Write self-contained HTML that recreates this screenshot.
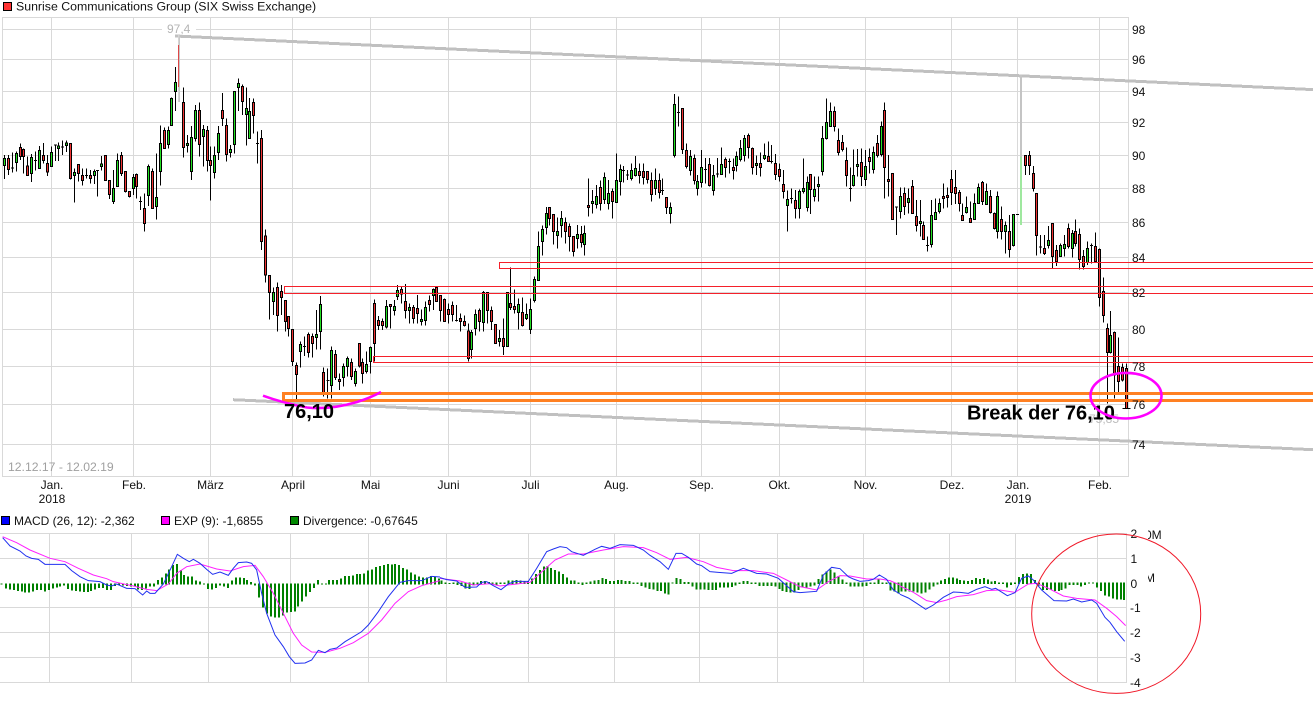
<!DOCTYPE html>
<html lang="de"><head><meta charset="utf-8"><title>Sunrise Communications Group</title>
<style>
html,body{margin:0;padding:0;background:#fff;width:1313px;height:715px;overflow:hidden}
svg{position:absolute;left:0;top:0;display:block}
text{font-family:"Liberation Sans",sans-serif;font-size:12px;fill:#111}
.w{stroke:#000;stroke-width:3;fill:none}
.r{stroke:#000;stroke-width:3;fill:#f03333}
.g{stroke:#000;stroke-width:3;fill:#22e022}
.h{stroke:#008000;stroke-width:6;fill:none}
.b{stroke:#2030f0;stroke-width:3;fill:none}
.m{stroke:#ff20ff;stroke-width:3;fill:none}
</style></head><body>
<svg width="1313" height="715" viewBox="0 0 1313 715" xmlns="http://www.w3.org/2000/svg">
<!-- main grid -->
<g shape-rendering="crispEdges" stroke="#d9d9d9" stroke-width="1" fill="none">
<path d="M2.5 17.5H1128.5V476.5H2.5Z"/>
<path d="M2 29.5H1128M2 59.5H1128M2 91.5H1128M2 122.5H1128M2 155.5H1128M2 188.5H1128M2 222.5H1128M2 257.5H1128M2 292.5H1128M2 329.5H1128M2 366.5H1128M2 404.5H1128M2 444.5H1128"/>
<path d="M51.5 17V476M133.5 17V476M210.5 17V476M292.5 17V476M370.5 17V476M448.5 17V476M530.5 17V476M616.5 17V476M701.5 17V476M779.5 17V476M865.5 17V476M951.5 17V476M1017.5 17V476M1099.5 17V476"/>
<!-- macd grid -->
<path d="M0 533.5H1127M0 558.5H1127M0 607.5H1127M0 632.5H1127M0 657.5H1127M0 682.5H1127"/>
<path d="M49.5 533V683M131.5 533V683M208.5 533V683M290.5 533V683M368.5 533V683M446.5 533V683M528.5 533V683M614.5 533V683M699.5 533V683M777.5 533V683M863.5 533V683M949.5 533V683M1015.5 533V683M1097.5 533V683M1126.5 533V683"/>
</g>
<!-- trend lines -->
<g shape-rendering="crispEdges" stroke="#c0c0c0" stroke-width="3" fill="none">
<path d="M175 36L1313 89.6"/>
<path d="M233 399.7L1313 449.7"/>
</g>
<rect x="162" y="25" width="34" height="9" fill="#fff"/>
<text x="167" y="33" style="fill:#b4b4b4">97,4</text>
<!-- special bars -->
<g shape-rendering="crispEdges" fill="none">
<path d="M178.5 35V102" stroke="#d4d4d4" stroke-width="1"/>
<path d="M179.5 35V102" stroke="#c8c8c8" stroke-width="1"/>
<path d="M178.5 45V87" stroke="#e04848" stroke-width="1"/>
<path d="M1021 75V157" stroke="#c4c4c4" stroke-width="2"/>
<path d="M1021 157V225" stroke="#9fe89f" stroke-width="2"/>
</g>
<!-- candles: segment 1 -->
<g transform="translate(0,0) scale(.33333)" shape-rendering="crispEdges">
<path class="w" d="M13 465V537M25 465V525M37 458V517M49 455V515M61 430V480M70 445V520M82 470V527M94 462V546M106 455V512M118 438V507M130 429V490M142 465V528M154 440V500M166 433V483M175 427V483M187 421V465M199 422V456M211 429V538M223 505V608M235 492V545M247 505V557M259 505V535M271 510V550M283 508V552M292 510V590M304 468V512M316 465V543M328 540V597M340 510V612M352 460V560M364 456V528M376 514V578M388 573V592M400 522V585M409 520V596M421 590V630M433 580V695M445 494V618M457 505V625M469 460V658M481 376V557M493 382V446M505 380V445M514 292V378M526 201V333M550 262V472M562 405V458M574 378V540M586 315V425M598 307V470M610 375V500M622 378V515M631 440V602M643 440V536M655 378V480M667 279V378M679 355V485M691 435V473M703 274V460M715 235V333M727 253V345M739 262V437M748 294V415M760 295V400M772 395V490M784 390V750M33 504h9M102 481h9M162 435h9M183 441h9M255 526h9M288 512h9M417 604h9M768 430h9"/>
<path class="g" d="M10 475h6V497h-6zM46 460h6V488h-6zM91 472h6V521h-6zM115 451h6V505h-6zM151 457h6V499h-6zM172 438h6V446h-6zM196 429h6V437h-6zM220 517h6V527h-6zM280 515h6V527h-6zM301 492h6V500h-6zM337 565h6V605h-6zM349 481h6V559h-6zM397 532h6V565h-6zM442 499h6V586h-6zM466 592h6V620h-6zM478 430h6V515h-6zM502 391h6V433h-6zM511 295h6V376h-6zM523 247h6V275h-6zM559 430h6V436h-6zM571 412h6V515h-6zM583 331h6V415h-6zM607 388h6V409h-6zM640 466h6V517h-6zM652 400h6V457h-6zM688 448h6V457h-6zM700 275h6V433h-6zM712 250h6V263h-6zM736 325h6V344h-6zM745 335h6V415h-6z"/>
<path class="r" d="M22 475h6V508h-6zM58 442h6V470h-6zM67 448h6V470h-6zM79 498h6V527h-6zM127 466h6V482h-6zM139 490h6V516h-6zM208 430h6V536h-6zM232 493h6V520h-6zM244 526h6V542h-6zM268 526h6V536h-6zM313 466h6V541h-6zM325 541h6V584h-6zM361 466h6V521h-6zM373 515h6V574h-6zM385 574h6V590h-6zM406 523h6V560h-6zM430 625h6V670h-6zM454 514h6V625h-6zM490 391h6V446h-6zM547 307h6V443h-6zM595 331h6V433h-6zM619 391h6V481h-6zM628 481h6V496h-6zM664 331h6V355h-6zM676 376h6V463h-6zM724 259h6V305h-6zM757 307h6V346h-6zM781 415h6V725h-6z"/>
</g>
<!-- candles: segment 2 -->
<g transform="translate(230,230) scale(.33333)" shape-rendering="crispEdges">
<path class="w" d="M106 -2V158M118 136V268M130 172V255M142 157V305M154 165V255M166 210V305M175 258V320M187 298V408M199 398V512M211 335V412M223 320V378M235 307V382M247 310V382M259 240V358M271 198V358M281 412V500M293 415V505M305 350V505M317 360V450M329 430V480M341 400V470M353 380V440M365 385V450M377 415V470M388 340V412M397 385V460M409 365V430M421 350V430M433 208V395M445 258V300M457 265V300M469 210V295M481 222V296M493 210V256M502 165V210M514 170V220M526 162V265M538 220V280M550 225V280M562 195V280M574 238V287M586 215V287M598 197V245M610 175V240M619 170V215M631 195V275M643 205V275M655 220V280M667 215V275M679 225V275M691 250V305M703 256V290M715 280V395M724 300V385M736 238V317M748 235V305M760 183V305M772 187V280M784 230V300M796 283V340M808 300V350M820 265V375M832 187V350M841 112V240M853 178V250M865 205V298M877 203V290M889 220V270M901 205V312M913 140V218M925 5V151M219 349h9M289 452h9M675 271h9"/>
<path class="g" d="M127 187h6V214h-6zM208 343h6V364h-6zM256 313h6V322h-6zM268 223h6V304h-6zM302 362h6V466h-6zM338 409h6V442h-6zM350 385h6V409h-6zM374 424h6V460h-6zM406 403h6V424h-6zM418 352h6V394h-6zM466 229h6V291h-6zM490 229h6V241h-6zM499 181h6V199h-6zM535 232h6V241h-6zM571 268h6V274h-6zM583 232h6V272h-6zM607 178h6V196h-6zM721 307h6V358h-6zM733 253h6V295h-6zM757 187h6V277h-6zM805 325h6V334h-6zM829 187h6V349h-6zM862 223h6V247h-6zM886 253h6V265h-6zM898 238h6V298h-6zM910 148h6V211h-6zM922 49h6V151h-6z"/>
<path class="r" d="M103 18h6V135h-6zM115 136h6V187h-6zM139 172h6V257h-6zM151 184h6V203h-6zM163 212h6V275h-6zM172 260h6V295h-6zM184 298h6V394h-6zM196 406h6V433h-6zM232 313h6V367h-6zM244 319h6V340h-6zM278 427h6V490h-6zM314 373h6V442h-6zM326 448h6V455h-6zM362 397h6V440h-6zM385 340h6V408h-6zM394 397h6V430h-6zM430 220h6V340h-6zM442 271h6V286h-6zM454 274h6V287h-6zM478 223h6V229h-6zM511 178h6V192h-6zM523 214h6V241h-6zM547 232h6V265h-6zM559 235h6V250h-6zM595 211h6V223h-6zM616 172h6V214h-6zM628 196h6V241h-6zM640 208h6V274h-6zM652 238h6V253h-6zM664 226h6V253h-6zM688 265h6V274h-6zM700 274h6V286h-6zM712 303h6V385h-6zM745 241h6V274h-6zM769 187h6V241h-6zM781 241h6V274h-6zM793 283h6V340h-6zM817 325h6V349h-6zM838 220h6V232h-6zM850 229h6V238h-6zM874 247h6V286h-6z"/>
</g>
<!-- candles: segment 3 -->
<g transform="translate(430,80) scale(.33333)" shape-rendering="crispEdges">
<path class="w" d="M337 436V527M349 381V463M358 381V437M370 403V493M382 412V505M394 393V472M406 412V490M418 430V515M430 469V530M442 435V505M454 438V502M463 436V527M475 295V410M487 330V400M499 315V385M511 302V392M523 277V372M535 300V388M547 325V416M559 220V367M571 253V347M580 258V307M592 270V300M604 250V302M616 228V290M628 250V310M640 250V314M652 274V310M664 278V365M676 265V345M688 280V355M697 295V345M709 352V402M721 367V431M576 271h9M588 285h9M693 332h9"/>
<path class="g" d="M334 448h6V485h-6zM346 400h6V443h-6zM379 454h6V466h-6zM391 415h6V436h-6zM439 463h6V475h-6zM460 460h6V493h-6zM484 364h6V370h-6zM496 349h6V373h-6zM520 292h6V358h-6zM532 340h6V370h-6zM556 301h6V367h-6zM568 268h6V304h-6zM601 271h6V295h-6zM613 265h6V286h-6zM673 301h6V325h-6zM718 382h6V400h-6z"/>
<path class="r" d="M355 382h6V415h-6zM367 404h6V454h-6zM403 427h6V455h-6zM415 439h6V469h-6zM427 469h6V515h-6zM451 463h6V487h-6zM472 376h6V382h-6zM508 322h6V370h-6zM544 334h6V364h-6zM625 274h6V286h-6zM637 274h6V292h-6zM649 274h6V298h-6zM661 301h6V343h-6zM685 301h6V337h-6zM706 352h6V382h-6z"/>
</g>
<!-- candles: segment 4 -->
<g transform="translate(660,80) scale(.33333)" shape-rendering="crispEdges">
<path class="w" d="M43 42V232M55 50V140M67 85V222M79 190V265M91 210V287M103 223V314M112 285V347M124 210V322M136 234V310M148 234V320M160 255V347M172 234V293M184 202V285M196 232V293M208 235V280M220 235V298M229 215V275M241 180V245M253 165V245M265 160V235M277 202V283M289 227V285M301 218V290M313 190V240M325 185V245M334 195V250M346 222V300M358 250V305M370 270V355M382 332V455M394 325V370M406 330V415M418 328V415M430 235V340M442 290V395M451 283V402M463 290V365M475 290V365M487 138V287M499 55V178M511 67V140M523 80V155M535 145V227M547 165V215M559 202V320M571 262V365M580 208V320M592 207V290M604 205V318M616 210V318M628 205V280M640 200V280M652 165V232M664 125V230M673 67V355M685 225V350M697 280V420M709 380V465M721 322V415M733 322V405M745 325V400M757 300V402M769 360V455M781 360V470M790 425V480M802 470V515M814 360V502M826 355V420M838 355V400M850 310V385M862 322V382M874 270V375M886 270V372M898 330V395M907 370V422M919 350V400M931 365V428M943 340V420M955 310V372M967 303V375M979 310V375M991 330V400M1003 397V448M1012 335V475M1024 380V478M1036 425V520M1048 405V532M1060 402V500M1096 225V285M1108 213V285M1120 258V335M1129 340V527M1141 465V520M1153 465V525M1165 438V505M1177 430V565M1189 495V558M1201 490V530M1213 465V530M1225 430V505M1237 450V532M1246 418V500M1258 445V568M1270 510V568M1282 485V555M1294 490V550M1306 458V545M1318 505V680M51 98h9M132 268h9M168 282h9M204 244h9M330 244h9M390 355h9M567 325h9M705 381h9M798 496h9M1068 403h9M1137 501h9M1290 497h9"/>
<path class="g" d="M40 73h6V226h-6zM88 229h6V271h-6zM109 304h6V325h-6zM121 262h6V307h-6zM157 286h6V331h-6zM181 253h6V283h-6zM226 229h6V256h-6zM238 205h6V238h-6zM250 175h6V226h-6zM286 250h6V256h-6zM310 226h6V235h-6zM379 358h6V376h-6zM415 334h6V385h-6zM427 325h6V334h-6zM439 307h6V382h-6zM460 328h6V349h-6zM472 313h6V319h-6zM484 175h6V274h-6zM496 127h6V175h-6zM508 94h6V139h-6zM577 286h6V316h-6zM589 253h6V259h-6zM613 259h6V298h-6zM637 217h6V268h-6zM661 139h6V223h-6zM718 349h6V394h-6zM742 355h6V367h-6zM778 424h6V430h-6zM811 406h6V493h-6zM823 397h6V418h-6zM835 370h6V394h-6zM916 382h6V397h-6zM940 370h6V418h-6zM952 322h6V370h-6zM976 334h6V373h-6zM1009 349h6V454h-6zM1033 436h6V454h-6zM1057 403h6V496h-6zM1162 481h6V496h-6zM1198 496h6V529h-6zM1210 493h6V505h-6zM1234 460h6V505h-6zM1279 505h6V548h-6z"/>
<path class="r" d="M64 85h6V208h-6zM76 211h6V259h-6zM100 235h6V301h-6zM145 253h6V316h-6zM193 238h6V262h-6zM217 262h6V271h-6zM262 166h6V202h-6zM274 205h6V262h-6zM298 250h6V262h-6zM322 229h6V244h-6zM343 250h6V283h-6zM355 268h6V289h-6zM367 313h6V334h-6zM403 361h6V385h-6zM448 283h6V328h-6zM520 94h6V139h-6zM532 181h6V217h-6zM544 187h6V208h-6zM556 241h6V287h-6zM601 247h6V289h-6zM625 232h6V244h-6zM649 190h6V226h-6zM670 91h6V262h-6zM682 298h6V304h-6zM694 280h6V418h-6zM730 340h6V379h-6zM754 319h6V400h-6zM766 409h6V436h-6zM787 436h6V478h-6zM847 349h6V355h-6zM859 346h6V352h-6zM871 298h6V337h-6zM883 322h6V340h-6zM895 337h6V370h-6zM904 406h6V421h-6zM928 415h6V427h-6zM964 307h6V364h-6zM988 349h6V397h-6zM1000 400h6V445h-6zM1021 418h6V454h-6zM1045 454h6V508h-6zM1093 226h6V256h-6zM1105 226h6V256h-6zM1117 280h6V325h-6zM1126 340h6V466h-6zM1150 505h6V520h-6zM1174 430h6V529h-6zM1186 511h6V544h-6zM1222 445h6V500h-6zM1243 454h6V490h-6zM1255 463h6V539h-6zM1267 529h6V560h-6zM1303 499h6V545h-6zM1315 509h6V652h-6z"/>
</g>
<!-- candles: segment 5 -->
<g transform="translate(960,220) scale(.33333)" shape-rendering="crispEdges">
<path class="w" d="M430 172V308M442 310V550M451 273V400M463 335V535M475 352V525M487 430V485M499 430V565M487 565H512"/>
<path class="g" d="M448 346h6V397h-6z"/>
<path class="r" d="M427 214h6V287h-6zM439 325h6V397h-6zM460 337h6V465h-6zM472 439h6V485h-6zM484 442h6V480h-6zM496 445h6V565h-6z"/>
</g>
<!-- red zones -->
<g shape-rendering="crispEdges" fill="none" stroke="#f5202a" stroke-width="1">
<path d="M1313 286.5H284.5V293.5H1313"/>
<path d="M1313 262.5H499.5V268.5H1313"/>
<path d="M1313 356.5H373.5V362.5H1313"/>
</g>
<!-- orange zone -->
<path d="M1313 393.5H283.5V400.5H1313" fill="none" stroke="#ff8022" stroke-width="3" shape-rendering="crispEdges"/>
<!-- hand annotations -->
<text x="1089" y="423" style="fill:#bdbdbd">75,85</text>
<path d="M263 395.7Q283 403 307 407.5Q330 410 357 402Q370 398 381 392" fill="none" stroke="#ff00ff" stroke-width="2.6"/>
<text x="284" y="418" style="font-size:20px;font-weight:bold;fill:#000">76,10</text>
<text x="967" y="419.5" style="font-size:20px;font-weight:bold;fill:#000">Break der 76,10</text>
<ellipse cx="1126" cy="395.7" rx="35.5" ry="22.8" fill="none" stroke="#ff00ff" stroke-width="2.6"/>
<!-- price labels -->
<text x="1132" y="34">98</text><text x="1132" y="64">96</text><text x="1132" y="96">94</text><text x="1132" y="127">92</text><text x="1132" y="160">90</text><text x="1132" y="193">88</text><text x="1132" y="227">86</text><text x="1132" y="262">84</text><text x="1132" y="297">82</text><text x="1132" y="334">80</text><text x="1132" y="371">78</text><text x="1132" y="409">76</text><text x="1132" y="449">74</text>
<!-- date range + x labels -->
<text x="8" y="471" style="fill:#a0a0a0;font-size:12.2px">12.12.17 - 12.02.19</text>
<g text-anchor="middle">
<text x="52" y="489">Jan.</text><text x="52" y="503">2018</text>
<text x="134" y="489">Feb.</text><text x="210.5" y="489">März</text><text x="293" y="489">April</text><text x="370.5" y="489">Mai</text><text x="448.5" y="489">Juni</text><text x="530.5" y="489">Juli</text><text x="616.5" y="489">Aug.</text><text x="701.5" y="489">Sep.</text><text x="779.5" y="489">Okt.</text><text x="865.5" y="489">Nov.</text><text x="952" y="489">Dez.</text>
<text x="1018" y="489">Jan.</text><text x="1018" y="503">2019</text>
<text x="1100" y="489">Feb.</text>
</g>
<!-- top legend -->
<rect x="3.5" y="2.5" width="8" height="8" fill="#f33" stroke="#000" shape-rendering="crispEdges"/>
<text x="16" y="10.5" style="font-size:12.33px">Sunrise Communications Group (SIX Swiss Exchange)</text>
<!-- macd legend -->
<g shape-rendering="crispEdges" stroke="#000">
<rect x="1.5" y="516.5" width="8" height="8" fill="#00f"/>
<rect x="161.5" y="516.5" width="8" height="8" fill="#f0f"/>
<rect x="290.5" y="516.5" width="8" height="8" fill="#080"/>
</g>
<text x="14" y="525">MACD (26, 12): -2,362</text>
<text x="174" y="525">EXP (9): -1,6855</text>
<text x="303" y="525">Divergence: -0,67645</text>
<!-- histogram -->
<g shape-rendering="crispEdges">
<path class="h" transform="translate(0,460) scale(.33333)" d="M5 370V374M18 370V385M30 370V388M42 370V390M54 370V393M66 370V394M75 370V398M87 370V397M99 370V395M111 370V390M123 370V390M135 370V395M147 370V390M159 370V385M171 370V383M180 370V379M192 370V376M204 370V387M216 370V392M228 370V393M240 370V395M252 370V396M264 370V396M273 370V393M285 370V388M297 370V384M309 370V384M321 370V390M333 370V390M345 370V378M357 370V375M369 370V376M381 370V378M393 370V380M405 370V380M414 370V388M426 370V390M438 370V385M450 370V380M462 370V380M474 373V360M486 373V352M498 373V340M507 373V328M519 373V315M531 373V312M543 373V330M552 373V345M564 373V350M576 373V350M588 373V362M600 373V364M612 373V370M624 370V387M636 370V388M648 370V384M660 370V376M672 370V380M684 370V384M696 373V362M708 373V352M720 373V352M732 373V354M741 373V360M753 373V366M765 370V376M777 370V412M789 370V442M801 370V460M813 370V470M825 370V472M837 370V472M849 370V466M861 370V458M873 370V456M885 370V454M894 370V440M906 370V424M918 370V410M930 370V396M942 370V384M954 373V360M966 373V370M978 373V370M987 373V360M999 373V360M1011 373V360M1023 373V355M1035 373V348M1047 373V348M1059 373V346M1071 373V342M1080 373V342M1092 373V340M1104 373V332M1116 373V328M1128 373V321M1140 373V318M1152 373V315M1164 373V312M1176 373V313M1185 373V312M1197 373V315M1209 373V324M1221 373V328M1233 373V338M1245 373V344M1257 373V350M1269 373V352M1281 373V352M1293 373V348M1305 373V350M1317 373V355"/>
<path class="h" transform="translate(440,510) scale(.33333)" d="M5 222V212M17 222V218M29 222V219M41 218V222M53 218V225M65 218V228M77 218V235M88 218V237M100 218V227M112 218V225M123 222V213M135 222V213M147 222V216M158 222V218M170 218V225M182 222V218M193 222V218M205 222V212M217 222V212M229 222V210M241 222V212M253 222V213M264 222V215M276 222V205M288 222V192M300 222V180M312 222V170M322 222V168M333 222V174M345 222V180M357 222V184M369 222V192M381 222V202M393 222V211M404 222V212M416 222V218M428 218V225M440 222V218M452 222V214M463 222V211M475 222V210M487 222V204M498 222V207M510 222V213M522 222V213M534 222V210M545 222V210M557 222V213M569 222V213M581 222V217M593 218V222M604 218V228M616 218V232M628 218V237M640 218V238M652 218V243M663 218V243M675 218V250M685 218V253M697 218V221M709 222V204M721 222V207M733 222V216M745 222V216M757 218V230M769 218V238M781 218V238M793 218V238M805 218V240M817 218V240M828 218V240M840 218V233M852 218V233M864 218V232M876 218V231M886 218V226M898 218V222M910 222V213M922 222V213M934 218V222M946 218V222M958 218V228M970 218V228M982 218V228M994 218V228M1006 218V230M1018 218V237M1028 218V243M1040 218V246M1052 218V247M1064 218V247M1076 218V240M1088 218V232M1100 218V232M1112 218V230M1124 218V226M1136 222V207M1148 222V193M1160 222V185M1172 222V178M1184 222V187M1196 222V198M1208 222V208M1220 222V218M1232 218V230M1244 218V230M1256 218V230M1268 218V230M1280 218V228M1292 218V222M1304 218V222M1316 222V206M1328 222V218M1340 218V222M1352 218V242M1364 218V245M1376 218V250"/>
<path class="h" transform="translate(900,510) scale(.33333)" d="M5 218V245M17 218V245M29 218V245M41 218V245M53 218V247M65 218V250M76 218V248M88 218V238M100 218V230M112 218V223M123 222V212M135 222V207M147 222V203M159 222V202M171 222V205M180 222V210M192 222V212M204 222V213M216 222V210M228 222V204M240 222V207M252 222V204M264 222V209M275 222V214M285 222V213M297 218V222M309 218V222M321 218V233M333 218V225M345 218V222M357 222V201M369 222V192M381 222V190M393 222V192M405 222V210M417 218V226M429 218V240M441 218V240M453 218V240M465 218V243M477 218V243M485 218V240M497 218V235M509 218V225M521 218V225M533 218V225M543 218V230M555 218V225M567 218V221M579 218V221M591 218V232M603 218V243M615 218V257M627 218V259M639 218V265M651 218V268M663 218V268M672 218V270"/>
</g>
<!-- exp lines -->
<polyline class="m" transform="translate(0,460) scale(.33333)" points="8,230 50,248 90,270 150,295 195,305 235,325 280,345 320,356 340,365 400,378 440,388 470,392 505,372 530,340 560,320 600,312 650,327 690,333 730,320 765,316 790,350 820,400 850,460 880,520 905,555 935,576 975,577 1020,565 1060,548 1105,520 1145,480 1185,430 1225,395 1265,377 1320,362"/>
<polyline class="m" transform="translate(440,510) scale(.33333)" points="0,205 60,213 100,225 150,221 180,228 230,222 270,217 300,190 345,150 385,132 430,132 490,120 550,110 610,113 650,128 690,148 740,142 790,155 830,172 880,182 940,182 1000,190 1040,210 1080,230 1130,240 1165,215 1200,197 1230,198 1280,207 1320,207 1350,212 1380,225"/>
<polyline class="m" transform="translate(900,510) scale(.33333)" points="0,228 40,247 80,272 110,278 140,270 170,260 220,254 260,242 300,240 345,247 385,222 410,220 445,235 490,258 530,265 585,270 620,295 650,320 677,347"/>
<!-- macd lines -->
<polyline class="b" transform="translate(0,460) scale(.33333)" points="8,233 30,258 60,273 78,288 95,295 115,298 135,313 195,313 215,332 240,350 265,362 300,365 320,375 335,378 350,372 380,385 405,386 428,405 440,393 450,400 465,400 490,372 515,320 532,283 550,295 568,305 580,298 600,310 620,328 638,343 660,336 685,346 700,325 715,308 740,306 755,310 770,330 785,400 800,460 825,525 850,560 868,590 885,610 915,609 935,600 955,571 975,578 990,568 1010,564 1035,545 1060,530 1085,515 1105,495 1135,455 1165,410 1200,367 1225,362 1265,362 1295,349 1320,351"/>
<polyline class="b" transform="translate(440,510) scale(.33333)" points="0,203 20,209 50,213 75,232 110,231 125,217 140,215 160,227 183,239 205,222 225,214 265,214 290,175 320,125 340,117 360,110 380,113 395,125 430,136 465,118 485,109 510,115 540,104 580,106 610,120 630,136 660,155 685,178 708,130 725,130 745,142 770,162 785,167 810,185 835,187 875,190 910,175 950,190 980,192 1015,205 1060,245 1080,248 1130,244 1150,195 1175,172 1200,176 1225,200 1240,207 1260,214 1285,212 1300,208 1318,195 1340,208 1360,240 1380,252"/>
<polyline class="b" transform="translate(900,510) scale(.33333)" points="0,253 25,264 50,280 77,298 100,285 130,262 160,246 180,247 205,250 230,238 255,230 275,238 287,235 322,257 345,248 365,205 385,198 400,210 425,240 462,272 500,273 520,267 545,276 575,270 590,280 615,322 630,337 650,365 674,394"/>
<!-- macd labels -->
<text x="1130.5" y="538">2</text><text x="1130.5" y="563">1</text><text x="1130.5" y="588">0</text><text x="1130" y="612">-1</text><text x="1130" y="637">-2</text><text x="1130" y="662">-3</text><text x="1130" y="687">-4</text>
<text x="1145" y="539">0M</text>
<text x="1145" y="582">M</text>
<rect x="1141" y="528" width="7" height="58" fill="#fff"/>
<ellipse cx="1116.2" cy="613.7" rx="84.5" ry="79.7" fill="none" stroke="#f01828" stroke-width="1"/>
</svg>
</body></html>
